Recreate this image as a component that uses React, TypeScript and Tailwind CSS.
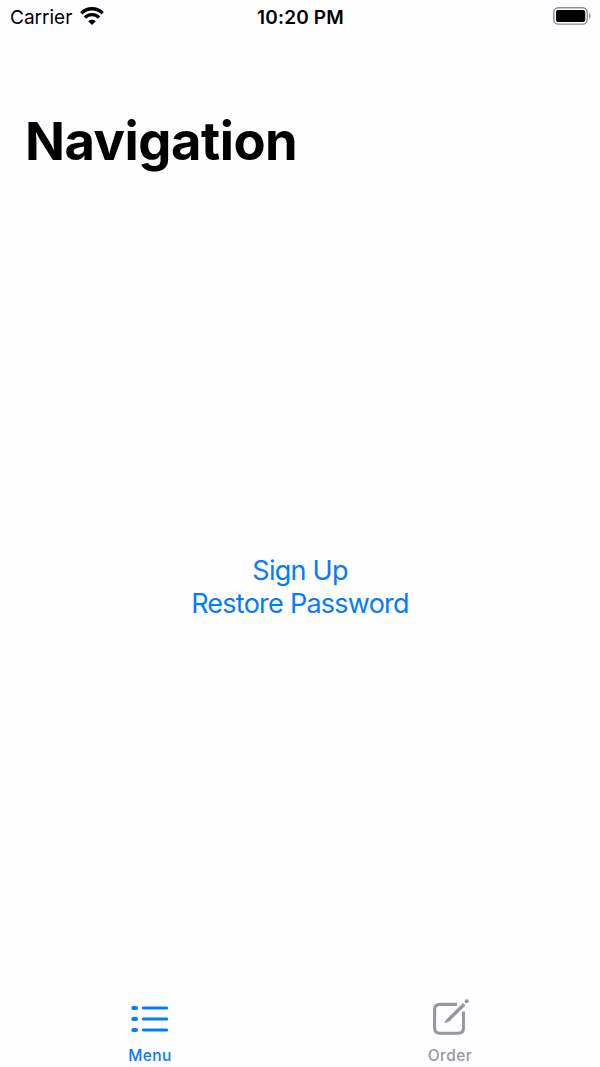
function WifiIcon() {
  return (
    <svg width="24" height="18" viewBox="0 0 24 18" fill="none" stroke="#000" strokeWidth="3.4">
      <path d="M1.3 6.2A15.2 15.2 0 0 1 22.7 6.2" />
      <path d="M5 10.5A9.9 9.9 0 0 1 19 10.5" />
      <path d="M12 18 8.2 14.2A5.6 5.6 0 0 1 15.8 14.2Z" fill="#000" stroke="none" />
    </svg>
  );
}

function BatteryIcon() {
  return (
    <svg width="38" height="18" viewBox="0 0 38 18" fill="none">
      <rect x="0.8" y="0.7" width="33.4" height="16.4" rx="4.6" stroke="#8e8e90" strokeWidth="1.4" />
      <rect x="3" y="3" width="29.2" height="12" rx="2" fill="#000" />
      <path d="M36 6.3c2.1.8 2.1 4.6 0 5.4Z" fill="#8e8e90" />
    </svg>
  );
}

function MenuIcon() {
  return (
    <svg width="38" height="28" viewBox="0 0 38 28" stroke="#067aff" strokeLinecap="round">
      <path d="M2.3 3H5M2.3 14H5M2.3 25H5" strokeWidth="4" />
      <path d="M12.3 3H35.7M12.3 14H35.7M12.3 25H35.7" strokeWidth="3" />
    </svg>
  );
}

function OrderIcon() {
  return (
    <svg width="38" height="38" viewBox="0 0 38 38" fill="none" stroke="#98989a">
      <path d="M26 6.4H8.8Q3.6 6.4 3.6 11.6V30Q3.6 35.2 8.8 35.2H27.3Q32.5 35.2 32.5 30V13.6" strokeWidth="3.1" />
      <path d="M32 4.9 34.5 7.4 18.8 22.9 14.8 24.9Q13.6 25.1 13.8 23.9L15.8 20.9Z" fill="#98989a" stroke="none" />
      <circle cx="35.7" cy="3.2" r="2" fill="#98989a" stroke="none" />
    </svg>
  );
}

export default function App() {
  return (
    <div className="flex h-[1067px] w-[600px] flex-col bg-[#fefdff] font-['Inter','Liberation_Sans',sans-serif] text-black">
      <header className="grid h-8 grid-cols-3 items-center pl-[10px] pr-[9px]">
        <div className="flex items-center gap-2">
          <span className="pt-1 text-[19px] leading-7">Carrier</span>
          <WifiIcon />
        </div>
        <span className="pt-1 text-center text-[19px] font-semibold leading-7 tracking-[0.15px]">10:20 PM</span>
        <div className="flex justify-end">
          <BatteryIcon />
        </div>
      </header>
      <h1 className="mt-[77px] pl-[25px] text-[52.5px] font-bold leading-[64px] tracking-[-0.5px]">Navigation</h1>
      <main className="flex flex-1 flex-col items-center pt-[381px] text-[27px] leading-[33px] tracking-[-0.75px] text-[#067aff]">
        <button>Sign Up</button>
        <button>Restore Password</button>
      </main>
      <nav className="grid h-[69px] grid-cols-2 text-[15.5px] font-[450] leading-5 tracking-[0.45px]">
        <button className="flex flex-col items-center text-[#067aff]">
          <span className="flex h-12 items-start pt-[7px]"><MenuIcon /></span>
          <span>Menu</span>
        </button>
        <button className="flex flex-col items-center text-[#98989a]">
          <span className="flex h-12 items-start"><OrderIcon /></span>
          <span>Order</span>
        </button>
      </nav>
    </div>
  );
}
